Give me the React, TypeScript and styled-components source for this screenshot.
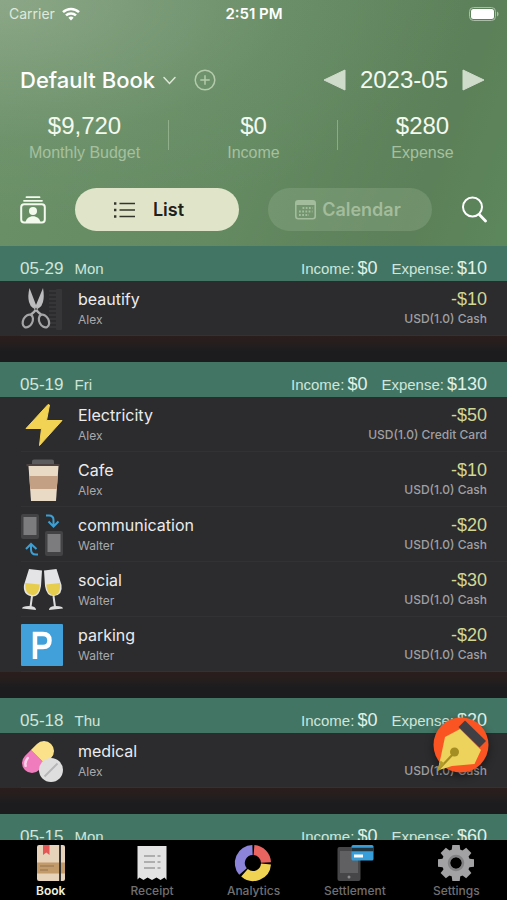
import React from "react";
import styled, { createGlobalStyle } from "styled-components";

const ui = `Inter, "Liberation Sans", sans-serif`;
const figures = `"Liberation Sans", Arial, sans-serif`;

const GlobalStyle = createGlobalStyle`
  *, *::before, *::after { box-sizing: border-box; }
  body { margin: 0; background: #000; font-family: ${ui}; }
  button { margin: 0; padding: 0; border: 0; background: none; color: inherit; font: inherit; cursor: pointer; }
  h1, h2, p, ul { margin: 0; padding: 0; font-weight: inherit; }
  ul { list-style: none; }
  svg { display: block; flex: none; }
`;

const Screen = styled.div`
  display: flex;
  flex-direction: column;
  height: 100vh;
  overflow: hidden;
  background: #1c1c1e;
`;

const Header = styled.header`
  flex: none;
  padding-bottom: 15px;
  color: #f4f9ee;
  background:
    radial-gradient(ellipse at 0% 0%, rgba(166, 184, 160, 0.55), rgba(140, 170, 140, 0.14) 40%, transparent 65%),
    linear-gradient(110deg, #6b9168 0%, #648a62 50%, #5c8059 82%, #5c875c 100%);
`;

const StatusBar = styled.div`
  display: grid;
  grid-template-columns: 1fr auto 1fr;
  align-items: center;
  height: 28px;
  padding: 0 8px 0 9px;
  font-size: 14px;
  line-height: 20px;
`;

const Carrier = styled.span`
  display: flex;
  align-items: center;
  gap: 7px;
  color: #dfe9dc;
`;

const Clock = styled.time`
  font-size: 15px;
  font-weight: 600;
  color: #fff;
`;

const Battery = styled.span`
  justify-self: end;
`;

const TitleRow = styled.div`
  display: flex;
  align-items: center;
  justify-content: space-between;
  height: 32px;
  margin-top: 36px;
  padding: 0 22px 0 20px;
`;

const TitleGroup = styled.div`
  display: flex;
  align-items: center;
  gap: 18px;
`;

const BookButton = styled.button`
  display: flex;
  align-items: center;
  gap: 8px;
`;

const BookTitle = styled.h1`
  font-size: 22px;
  line-height: 32px;
  font-weight: 500;
  color: #fff;
`;

const MonthPicker = styled.div`
  display: flex;
  align-items: center;
  gap: 14px;
  font: 24px/32px ${figures};
`;

const Totals = styled.ul`
  display: grid;
  grid-template-columns: repeat(3, 1fr);
  margin-top: 14px;
`;

const Total = styled.li`
  display: flex;
  flex-direction: column;
  align-items: center;
  font-family: ${figures};
  background: linear-gradient(rgba(190, 214, 180, 0.45), rgba(190, 214, 180, 0.45)) right 10px / 1px 30px no-repeat;
  &:last-child { background: none; }
`;

const TotalValue = styled.strong`
  font-size: 24px;
  line-height: 32px;
  font-weight: 400;
`;

const TotalLabel = styled.span`
  font-size: 16px;
  line-height: 22px;
  color: #a6c09f;
`;

const ViewBar = styled.div`
  display: grid;
  grid-template-columns: 26px 1fr 1fr 26px;
  gap: 29px;
  align-items: center;
  margin-top: 24px;
  padding: 0 20px;
`;

const ViewButton = styled.button<{ $active?: boolean }>`
  display: flex;
  align-items: center;
  justify-content: center;
  gap: ${(p) => (p.$active ? 18 : 6)}px;
  height: 43px;
  padding-right: ${(p) => (p.$active ? 16 : 4)}px;
  border-radius: 22px;
  font-size: 18px;
  font-weight: 600;
  color: ${(p) => (p.$active ? "#1f211b" : "#a3bc9c")};
  background: ${(p) => (p.$active ? "#e0e5ca" : "rgba(163, 188, 156, 0.27)")};
`;

const ListArea = styled.main`
  position: relative;
  flex: 1;
  min-height: 0;
`;

const DayList = styled.div`
  height: 100%;
  overflow: hidden;
`;

const Day = styled.section`
  padding-bottom: 26px;
  background: linear-gradient(#2b1e1d, #241e1e 35%, #1c1c1e 60%) bottom / 100% 26px no-repeat;
`;

const DayHeader = styled.header`
  display: flex;
  align-items: baseline;
  justify-content: space-between;
  height: 35px;
  padding: 10px 20px 0;
  font: 15px/24px ${figures};
  color: #cfe6da;
  background: #437565;
`;

const DayDate = styled.h2`
  display: flex;
  align-items: baseline;
  gap: 11px;
  font-size: 15px;
`;

const DayNumber = styled.time`
  font-size: 17px;
`;

const DaySums = styled.p`
  display: flex;
  gap: 14px;
`;

const SumGroup = styled.span`
  display: flex;
  align-items: baseline;
  gap: 3px;
`;

const Sum = styled.span`
  font-size: 18px;
  color: #e0f2e8;
`;

const Entry = styled.li`
  display: flex;
  align-items: center;
  gap: 15px;
  height: 55px;
  padding: 0 20px 0 21px;
  background: linear-gradient(#323234, #323234) 21px bottom / 100% 1px no-repeat #2c2c2e;
`;

const EntryText = styled.div`
  flex: 1;
  min-width: 0;
`;

const EntryMoney = styled.div`
  text-align: right;
`;

const EntryName = styled.p`
  font-size: 16px;
  line-height: 22px;
  color: #ebebed;
`;

const EntryOwner = styled.p`
  font-size: 12px;
  line-height: 20px;
  color: #a9a9ac;
`;

const Amount = styled.p`
  font: 18px/22px ${figures};
  color: #d2d795;
`;

const Account = styled.p`
  font-size: 12px;
  line-height: 18px;
  padding-bottom: 2px;
  font-weight: 500;
  color: #a0a0a3;
`;

const AddEntry = styled.button`
  position: absolute;
  right: 18px;
  bottom: 65px;
  width: 56px;
  height: 58px;
  filter: drop-shadow(0 3px 4px rgba(0, 0, 0, 0.45));
`;

const TabBar = styled.nav`
  flex: none;
  display: grid;
  grid-template-columns: repeat(5, 1fr);
  height: 60px;
  padding-top: 5px;
  background: #000;
`;

const Tab = styled.button<{ $active?: boolean }>`
  display: flex;
  flex-direction: column;
  align-items: center;
  font-size: 12px;
  line-height: 20px;
  font-weight: ${(p) => (p.$active ? 600 : 500)};
  color: ${(p) => (p.$active ? "#eef0dc" : "#707073")};
`;

const WifiIcon = () => (
  <svg width="18" height="14" viewBox="0 0 18 14" fill="none" stroke="#fff" strokeWidth="2.5">
    <path d="M1 5.2a11.5 11.5 0 0 1 16 0" />
    <path d="M4 8.4a7.2 7.2 0 0 1 10 0" />
    <path d="M6.4 10.8a3.8 3.8 0 0 1 5.2 0L9 13.6z" fill="#fff" stroke="none" />
  </svg>
);

const BatteryIcon = () => (
  <svg width="30" height="14" viewBox="0 0 30 14">
    <rect x="0.5" y="0.5" width="26" height="13" rx="4" fill="none" stroke="#a9bfa5" />
    <rect x="2" y="2" width="23" height="10" rx="2.5" fill="#fff" />
    <path d="M28 4.5c2 .8 2 4.2 0 5z" fill="#a9bfa5" />
  </svg>
);

const ChevronIcon = () => (
  <svg width="13" height="9" viewBox="0 0 13 9" fill="none" stroke="#dce8d5" strokeWidth="1.5" strokeLinecap="round">
    <path d="M1 1.5l5.5 6 5.5-6" />
  </svg>
);

const PlusIcon = () => (
  <svg width="22" height="22" viewBox="0 0 22 22" fill="none" stroke="#b3cbab" strokeWidth="1.5" strokeLinecap="round">
    <circle cx="11" cy="11" r="9.8" />
    <path d="M11 6.8v8.4M6.8 11h8.4" />
  </svg>
);

const ArrowIcon = ({ back = false }: { back?: boolean }) => (
  <svg width="23" height="22" viewBox="0 0 23 22" fill="#d0dccb" stroke="#d0dccb" strokeLinejoin="round">
    <path d={back ? "M22 1v20L1 11z" : "M1 1v20l21-10z"} />
  </svg>
);

const MembersIcon = () => (
  <svg width="26" height="28" viewBox="0 0 26 28" fill="none" stroke="#f4f9ee">
    <path d="M6.500 1.200h13M4 4.800h18" strokeWidth="1.8" strokeLinecap="round" />
    <rect x="1.200" y="8.300" width="23.600" height="18.300" rx="3" strokeWidth="2" />
    <circle cx="13" cy="15" r="4" fill="#f4f9ee" stroke="none" />
    <path d="M5.500 26.500c1-8.500 14-8.500 15 0z" fill="#f4f9ee" stroke="none" />
  </svg>
);

const SearchIcon = () => (
  <svg width="26" height="27" viewBox="0 0 26 27" fill="none" stroke="#fff" strokeLinecap="round">
    <circle cx="11.500" cy="11" r="9.500" strokeWidth="2" />
    <path d="M18.500 18.800l6 6.200" strokeWidth="2.800" />
  </svg>
);

const BulletsIcon = () => (
  <svg width="21" height="16" viewBox="0 0 21 16" stroke="#33352c" strokeWidth="1.6">
    <path d="M5.5 1.5H21M5.5 8H21M5.5 14.5H21" />
    <path d="M0 1.5h2.4M0 8h2.4M0 14.5h2.4" strokeWidth="2.6" />
  </svg>
);

const CalendarIcon = () => (
  <svg width="21" height="20" viewBox="0 0 21 20" fill="none" stroke="#a3bc9c">
    <rect x="0.8" y="0.8" width="19.4" height="18" rx="2.5" strokeWidth="1.6" />
    <path d="M1 3h19" strokeWidth="4" />
    <path d="M7.5 8h10M4 11.5h13.5M4 15h10" strokeWidth="1.8" strokeDasharray="1.8 1.4" />
  </svg>
);

const entryArt = {
  beautify: (
    <>
      <g fill="#363638">
        <rect x="35" y="1" width="6" height="41" rx="1" />
        <path d="M28 2h7v2h-7zM28 6h7v2h-7zM28 10h7v2h-7zM28 14h7v2h-7zM28 18h7v2h-7zM28 22h7v2h-7zM28 26h7v2h-7zM28 30h7v2h-7zM28 34h7v2h-7zM28 38h7v2h-7z" />
      </g>
      <path d="M8.500 0L15 17v4l-3-1q-3-2-4-6Q6.500 8 8.500 0zM22 0l-7 17v4l3-1q3-2 4-6 1.500-6 0-14z" fill="#bdbdbf" />
      <path d="M16.500 19Q14 24 9.500 27M13.500 19q2.500 5 7 8" fill="none" stroke="#b0b0b2" strokeWidth="2.600" />
      <g fill="none" stroke="#a5a5a8" strokeWidth="2.200">
        <ellipse cx="6.800" cy="33" rx="4.600" ry="6.800" transform="rotate(28 6.800 33)" />
        <ellipse cx="23" cy="33" rx="4.600" ry="6.800" transform="rotate(-28 23 33)" />
      </g>
      <circle cx="15" cy="21" r="1" fill="#555" />
    </>
  ),
  electricity: <path d="M27 0.500L5 24.500h15.500L18.500 41.500 41 16.500H25.500l3-15.500z" fill="#f3d354" stroke="#f3d354" strokeLinejoin="round" />,
  cafe: (
    <>
      <path d="M11 2.500Q11 .5 13 .5h18q2 0 2 2v3H11z" fill="#5b5b5d" />
      <path d="M5.500 5h33v2.200h-33z" fill="#4c4242" />
      <path d="M7.500 7h30l-2.500 35H10z" fill="#e9dac6" />
      <path d="M8.400 17h28.400l-1.100 13H9.300z" fill="#c3a084" />
    </>
  ),
  communication: (
    <>
      <rect x="0" y="0" width="18" height="25" rx="2" fill="#434345" />
      <rect x="2.500" y="3" width="13" height="18" fill="#7c7c7e" />
      <rect x="24" y="17" width="18" height="25" rx="2" fill="#434345" />
      <rect x="26.500" y="20" width="13" height="18" fill="#7c7c7e" />
      <g fill="none" stroke="#3d9fd3" strokeWidth="2">
        <path d="M25 1.500h3q4.500 0 4.500 4.500v6M27.500 7.500l5 5 5-5" />
        <path d="M17 40.500h-2q-5 0-5-5V30M5 35l5-5 5.500 5" />
      </g>
    </>
  ),
  social: (
    <>
      <path d="M8 0l13 1.500L20 17q-1.500 11-8.500 10.500Q1.500 26 3 16zM35.500 0L23 1.500 24 17q1.500 10.500 9 10Q42 26 40.500 16z" fill="#e4e4e6" />
      <path d="M4.300 14l14.500 1.500Q18 27 11 26 3.500 25 4.300 14zM25.200 15.500L39 14q1 12-6 12.200-7 0-7.800-10.700z" fill="#e7cd4d" />
      <path d="M11 27L9.500 38M32.500 27L34 38" stroke="#dcdcde" strokeWidth="2" />
      <path d="M1 39.500q0-2.500 7-2.500t7 4zM42 39.500q0-2.500-7-2.500t-7 4z" fill="#dededf" />
    </>
  ),
  parking: (
    <>
      <rect width="42" height="42" rx="1" fill="#419fd9" />
      <path d="M14 35V10h8q6.500 0 6.500 6.500T22 23h-8" fill="none" stroke="#fff" strokeWidth="4.500" />
    </>
  ),
  medical: (
    <>
      <g transform="rotate(45 17 17)">
        <path d="M7 17h20v8.500a10 10 0 0 1-20 0z" fill="#f07cbd" />
        <path d="M7 17V8.500a10 10 0 0 1 20 0V17z" fill="#fbe28a" />
        <path d="M10.500 25q.5 5 4 7" fill="none" stroke="#ffd2ec" strokeWidth="2.500" strokeLinecap="round" />
      </g>
      <circle cx="30" cy="30" r="12" fill="#dededf" />
      <path d="M23.500 36.500l13-13" stroke="#b6b6b8" strokeWidth="1.800" />
    </>
  ),
};

type ArtName = keyof typeof entryArt;

const EntryIcon = ({ name }: { name: ArtName }) => (
  <svg width="42" height="42" viewBox="0 0 42 42" overflow="visible" aria-hidden="true">
    {entryArt[name]}
  </svg>
);

const PenIcon = () => (
  <svg width="56" height="58" viewBox="0 0 56 58">
    <circle cx="28" cy="28" r="27.500" fill="#fb5423" />
    <path d="M12 20l15-8 21 21-6.500 14L19 49 4.500 53.500 8 39z" fill="#edd35c" />
    <path d="M4.500 53.500L22 35" stroke="#a48d22" strokeWidth="2.200" />
    <path d="M4.500 53.500l3-10 4 3z" fill="#b39c2c" />
    <circle cx="21.500" cy="35" r="4.500" fill="#a48d22" />
    <path d="M32 3.500L53 24l-6.500 6.500L25.500 10z" fill="#404044" />
  </svg>
);

const gearTeeth = [0, 45, 90, 135, 180, 225, 270, 315];

const tabArt = {
  Book: (
    <>
      <rect x="4" y="0" width="28" height="36" rx="2" fill="#e6d3b9" />
      <path d="M4 17.500h28v11H4z" fill="#c39b6a" />
      <path d="M7 21h14M7 25h8" stroke="#907253" />
      <path d="M10 0h6.500v10l-3.200-2.500L10 10z" fill="#e45757" />
      <path d="M27 0v36" stroke="#333" strokeWidth="2" />
    </>
  ),
  Receipt: (
    <>
      <path d="M3.500 1h29v34l-2-2.500-4 2.500-4-2.500-4.500 2.500-4.500-2.500-4 2.500-4-2.500-2 2z" fill="#e3e3e3" />
      <path d="M10 11h11M23.500 11h3M10 17h11M23.500 17h3M10 23h11M23.500 23h3" stroke="#9d9d9f" strokeWidth="1.500" />
    </>
  ),
  Analytics: (
    <g fill="none" strokeWidth="10">
      <path d="M17.500 5A13 13 0 0 0 8 26.500" stroke="#8b84da" />
      <path d="M19 5A13 13 0 0 1 31 17.500" stroke="#e86460" />
      <path d="M31 19A13 13 0 0 1 9.500 27.800" stroke="#f0d352" />
    </g>
  ),
  Settlement: (
    <>
      <rect x="0.500" y="2" width="23" height="34" rx="2" fill="#464648" />
      <rect x="3" y="6" width="18" height="22" fill="#606062" />
      <circle cx="12" cy="32" r="1.500" fill="#8a8a8c" />
      <rect x="14.500" y="0" width="22" height="15.500" rx="1.500" fill="#389ed9" />
      <path d="M14.500 4.500h22" stroke="#1f3540" strokeWidth="3.500" />
      <path d="M17 11h9" stroke="#fff" strokeWidth="3" />
    </>
  ),
  Settings: (
    <>
      {gearTeeth.map((angle) => (
        <path key={angle} d="M13.500 7l.8-7h7.400l.8 7z" fill="#a2a2a4" transform={`rotate(${angle} 18 18)`} />
      ))}
      <circle cx="18" cy="18" r="10" fill="none" stroke="#a2a2a4" strokeWidth="8" />
      <circle cx="18" cy="18" r="7" fill="none" stroke="#828284" strokeWidth="2.500" />
    </>
  ),
};

type TabName = keyof typeof tabArt;

const totals = [
  { value: "$9,720", label: "Monthly Budget" },
  { value: "$0", label: "Income" },
  { value: "$280", label: "Expense" },
];

type EntryData = { icon: ArtName; name: string; owner: string; amount: string; account: string };
type DayData = { date: string; weekday: string; expense: string; entries: EntryData[] };

const cash = "USD(1.0) Cash";

const days: DayData[] = [
  {
    date: "05-29", weekday: "Mon", expense: "$10",
    entries: [{ icon: "beautify", name: "beautify", owner: "Alex", amount: "-$10", account: cash }],
  },
  {
    date: "05-19", weekday: "Fri", expense: "$130",
    entries: [
      { icon: "electricity", name: "Electricity", owner: "Alex", amount: "-$50", account: "USD(1.0) Credit Card" },
      { icon: "cafe", name: "Cafe", owner: "Alex", amount: "-$10", account: cash },
      { icon: "communication", name: "communication", owner: "Walter", amount: "-$20", account: cash },
      { icon: "social", name: "social", owner: "Walter", amount: "-$30", account: cash },
      { icon: "parking", name: "parking", owner: "Walter", amount: "-$20", account: cash },
    ],
  },
  {
    date: "05-18", weekday: "Thu", expense: "$20",
    entries: [{ icon: "medical", name: "medical", owner: "Alex", amount: "-$20", account: cash }],
  },
  { date: "05-15", weekday: "Mon", expense: "$60", entries: [] },
];

const tabs: TabName[] = ["Book", "Receipt", "Analytics", "Settlement", "Settings"];

export default function App() {
  return (
    <Screen>
      <GlobalStyle />
      <Header>
        <StatusBar>
          <Carrier>Carrier <WifiIcon /></Carrier>
          <Clock>2:51 PM</Clock>
          <Battery><BatteryIcon /></Battery>
        </StatusBar>
        <TitleRow>
          <TitleGroup>
            <BookButton>
              <BookTitle>Default Book</BookTitle>
              <ChevronIcon />
            </BookButton>
            <button aria-label="Add book"><PlusIcon /></button>
          </TitleGroup>
          <MonthPicker>
            <button aria-label="Previous month"><ArrowIcon back /></button>
            <time>2023-05</time>
            <button aria-label="Next month"><ArrowIcon /></button>
          </MonthPicker>
        </TitleRow>
        <Totals>
          {totals.map((total) => (
            <Total key={total.label}>
              <TotalValue>{total.value}</TotalValue>
              <TotalLabel>{total.label}</TotalLabel>
            </Total>
          ))}
        </Totals>
        <ViewBar>
          <button aria-label="Members"><MembersIcon /></button>
          <ViewButton $active aria-pressed="true"><BulletsIcon />List</ViewButton>
          <ViewButton aria-pressed="false"><CalendarIcon />Calendar</ViewButton>
          <button aria-label="Search"><SearchIcon /></button>
        </ViewBar>
      </Header>
      <ListArea>
        <DayList>
          {days.map((day) => (
            <Day key={day.date}>
              <DayHeader>
                <DayDate><DayNumber>{day.date}</DayNumber>{day.weekday}</DayDate>
                <DaySums>
                  <SumGroup>Income: <Sum>$0</Sum></SumGroup>
                  <SumGroup>Expense: <Sum>{day.expense}</Sum></SumGroup>
                </DaySums>
              </DayHeader>
              <ul>
                {day.entries.map((entry) => (
                  <Entry key={entry.name}>
                    <EntryIcon name={entry.icon} />
                    <EntryText>
                      <EntryName>{entry.name}</EntryName>
                      <EntryOwner>{entry.owner}</EntryOwner>
                    </EntryText>
                    <EntryMoney>
                      <Amount>{entry.amount}</Amount>
                      <Account>{entry.account}</Account>
                    </EntryMoney>
                  </Entry>
                ))}
              </ul>
            </Day>
          ))}
        </DayList>
        <AddEntry aria-label="Add entry"><PenIcon /></AddEntry>
      </ListArea>
      <TabBar>
        {tabs.map((tab) => (
          <Tab key={tab} $active={tab === "Book"} aria-current={tab === "Book" ? "page" : undefined}>
            <svg width="36" height="36" viewBox="0 0 36 36" overflow="visible" aria-hidden="true">{tabArt[tab]}</svg>
            {tab}
          </Tab>
        ))}
      </TabBar>
    </Screen>
  );
}
